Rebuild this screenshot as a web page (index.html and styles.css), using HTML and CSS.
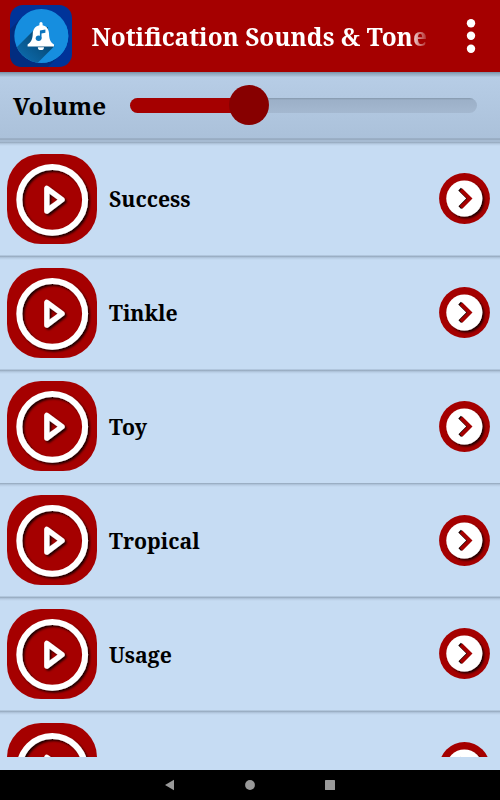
FILE: index.html
```html
<!DOCTYPE html>
<html lang="en">
<head>
<meta charset="utf-8">
<meta name="viewport" content="width=device-width, initial-scale=1">
<title>Notification Sounds</title>
<link rel="stylesheet" href="styles.css">
</head>
<body>
<svg width="0" height="0" class="defs" aria-hidden="true">
  <defs>
    <filter id="soft" x="-20%" y="-20%" width="150%" height="150%"><feDropShadow dx="1.8" dy="1.8" stdDeviation="1.3" flood-color="#000" flood-opacity=".85"/></filter>
    <clipPath id="disc"><circle cx="31.3" cy="31" r="27"/></clipPath>
    <linearGradient id="fade" gradientUnits="userSpaceOnUse" x1="34" y1="34" x2="16" y2="54"><stop offset="0" stop-color="#064a78"/><stop offset="1" stop-color="#0c67a6"/></linearGradient>
    <symbol id="play" viewBox="0 0 90 90">
      <rect width="90" height="90" rx="34" fill="#a50000"/>
      <g fill="none" stroke="#fff" filter="url(#soft)">
        <circle cx="45.2" cy="45.800" r="32.900" stroke-width="6"/>
        <path d="M39.800 34.400V57L55 45.700Z" stroke-width="5.300" stroke-linejoin="round"/>
      </g>
    </symbol>
    <symbol id="go" viewBox="0 0 51 51">
      <circle cx="25.5" cy="25.5" r="25.4" fill="#a50000"/>
      <circle cx="25.3" cy="25.5" r="18" fill="#fff" filter="url(#soft)"/>
      <path d="M20.600 16.200L30 25.400L20.800 34.600" fill="none" stroke="#190000" stroke-width="3.800"/>
      <path d="M22 16.800L30.800 25.600L22 34.400" fill="none" stroke="#a50000" stroke-width="3.800"/>
    </symbol>
  </defs>
</svg>
<header class="bar">
  <svg class="logo" viewBox="0 0 62 62">
    <rect width="62" height="62" rx="13" fill="#003399"/>
    <path d="M12 12L0 24V49Q0 62 13 62H38L52 48Z" fill="#022d80"/>
    <circle cx="31.300" cy="31" r="27" fill="#168edf"/>
    <path d="M24 25L-5 54L20 75L54 31.500L38 22Z" fill="url(#fade)" clip-path="url(#disc)"/>
    <path d="M44.500 41L20 65.500L62 65V20L38 20V35Z" fill="#168edf" clip-path="url(#disc)"/>
    <path d="M31 17a1.600 1.600 0 0 1 1.600 1.600v1.700c4 .7 6.200 4 6.400 8 .2 5.500 1 8.500 5 11.300v1.800H17.600v-1.800c3.900-2.800 5-5.800 5.200-11.300.2-4 2.600-7.300 6.600-8v-1.700A1.600 1.600 0 0 1 31 17Z" fill="#fff"/>
    <path d="M27.800 42.200h6.200a3.100 2.900 0 0 1-6.200 0Z" fill="#fff"/>
    <g fill="#0c75bd"><ellipse cx="28.600" cy="33.200" rx="2.900" ry="2.700"/><path d="M29.900 25.500l5.500-1v3.300l-3.900.7v5h-1.600Z"/></g>
  </svg>
  <h1 class="title">Notification Sounds &amp; Tone</h1>
  <svg class="more" viewBox="0 0 10 36" fill="#fff"><circle cx="5" cy="5.200" r="4.200"/><circle cx="5" cy="17.800" r="4.200"/><circle cx="5" cy="30.800" r="4.200"/></svg>
</header>
<section class="volume">
  <span class="vlabel">Volume</span>
  <div class="track"><div class="level"></div><div class="knob"></div></div>
</section>
<main class="list">
  <div class="row"><svg class="play"><use href="#play"/></svg><span class="name">Success</span><svg class="go"><use href="#go"/></svg></div>
  <div class="row"><svg class="play"><use href="#play"/></svg><span class="name">Tinkle</span><svg class="go"><use href="#go"/></svg></div>
  <div class="row"><svg class="play"><use href="#play"/></svg><span class="name">Toy</span><svg class="go"><use href="#go"/></svg></div>
  <div class="row"><svg class="play"><use href="#play"/></svg><span class="name">Tropical</span><svg class="go"><use href="#go"/></svg></div>
  <div class="row"><svg class="play"><use href="#play"/></svg><span class="name">Usage</span><svg class="go"><use href="#go"/></svg></div>
  <div class="row"><svg class="play"><use href="#play"/></svg><span class="name"></span><svg class="go"><use href="#go"/></svg></div>
</main>
<nav class="nav">
  <svg viewBox="0 0 170 12" fill="#999"><path d="M0 6L9 .8V11.200Z"/><circle cx="85" cy="6" r="4.900"/><rect x="160" y="1" width="10" height="10" rx=".6"/></svg>
</nav>
</body>
</html>
```
FILE: styles.css
```css
* { box-sizing: border-box; }
body {
  margin: 0;
  width: 500px;
  height: 800px;
  overflow: hidden;
  display: flex;
  flex-direction: column;
  background: #c6dcf3;
  color: #000;
  font-family: "Noto Serif", "Droid Serif", "DejaVu Serif Condensed", "DejaVu Serif", serif;
  font-weight: 700;
}
svg { display: block; flex: none; }
.defs { position: absolute; }
.bar {
  height: 72px;
  flex: none;
  display: flex;
  align-items: center;
  padding: 0 24px 0 10px;
  background: #a50000;
}
.logo { width: 62px; height: 62px; }
.title {
  width: 340px;
  margin: 2px 0 0 19.500px;
  white-space: nowrap;
  color: #fff;
  font-size: 24.400px;
  line-height: 36px;
  -webkit-mask-image: linear-gradient(90deg, #000 318px, transparent 338px);
  mask-image: linear-gradient(90deg, #000 318px, transparent 338px);
}
.more { width: 10px; height: 36px; margin-left: 34.500px; }
.volume {
  height: 70px;
  flex: none;
  display: flex;
  align-items: center;
  padding: 0 23px 3px 13px;
  background: linear-gradient(#7790a6 0, #94acc3 2px, #a5bdd5 4px, #b7cde6 5px, #abc1da 66px, #8b9db2 67px, #a6bbd2 68px, #a6bbd2 70px);
}
.vlabel { width: 117px; font-size: 24.300px; line-height: 34px; padding-top: 1px; }
.track {
  position: relative;
  width: 347px;
  height: 15px;
  border-radius: 8px;
  background: linear-gradient(#8497ac 0, #9cb0c8 2px, #a4b8d0 100%);
}
.level { width: 120px; height: 15px; border-radius: 8px 0 0 8px; background: #a50000; }
.knob {
  position: absolute;
  left: 99px;
  top: -13px;
  width: 40px;
  height: 40px;
  border-radius: 50%;
  background: #870000;
}
.list { height: 615px; flex: none; overflow: hidden; }
.row {
  height: 113.800px;
  display: flex;
  align-items: center;
  padding: 0 10px 0 7px;
  background: linear-gradient(#8fa2b6 0, #a6bbd1 1px, #b7cce3 2px, #c6dcf3 4px, #c6dcf3 112.800px, #a8bdd3 113.800px);
}
.play { width: 90px; height: 90px; margin-top: -.4px; }
.name { flex: 1; padding: 1px 0 0 12px; font-size: 21.250px; line-height: 30px; }
.go { width: 51px; height: 51px; margin-top: -.5px; }
.nav {
  height: 30px;
  flex: none;
  margin-top: 13px;
  background: #000;
}
.nav svg { width: 170px; height: 12px; margin: 9px 0 0 165px; }
```
